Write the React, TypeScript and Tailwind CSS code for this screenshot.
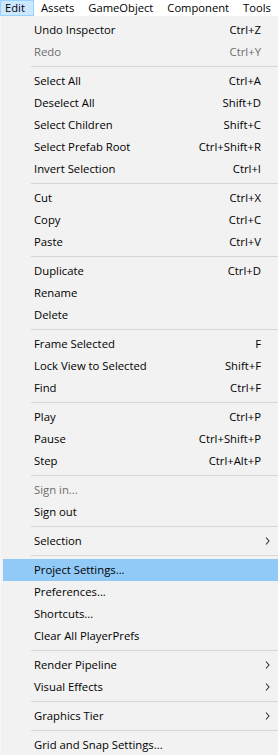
import React from 'react';

type Item =
  | { kind: 'sep' }
  | { kind: 'item'; label: string; shortcut?: string; disabled?: boolean; sub?: boolean; active?: boolean };

const sep: Item = { kind: 'sep' };
const it = (label: string, shortcut?: string, extra: Partial<{ disabled: boolean; sub: boolean; active: boolean }> = {}): Item => ({
  kind: 'item', label, shortcut, ...extra,
});

const ITEMS: Item[] = [
  it('Undo Inspector', 'Ctrl+Z'),
  it('Redo', 'Ctrl+Y', { disabled: true }),
  sep,
  it('Select All', 'Ctrl+A'),
  it('Deselect All', 'Shift+D'),
  it('Select Children', 'Shift+C'),
  it('Select Prefab Root', 'Ctrl+Shift+R'),
  it('Invert Selection', 'Ctrl+I'),
  sep,
  it('Cut', 'Ctrl+X'),
  it('Copy', 'Ctrl+C'),
  it('Paste', 'Ctrl+V'),
  sep,
  it('Duplicate', 'Ctrl+D'),
  it('Rename'),
  it('Delete'),
  sep,
  it('Frame Selected', 'F'),
  it('Lock View to Selected', 'Shift+F'),
  it('Find', 'Ctrl+F'),
  sep,
  it('Play', 'Ctrl+P'),
  it('Pause', 'Ctrl+Shift+P'),
  it('Step', 'Ctrl+Alt+P'),
  sep,
  it('Sign in...', undefined, { disabled: true }),
  it('Sign out'),
  sep,
  it('Selection', undefined, { sub: true }),
  sep,
  it('Project Settings...', undefined, { active: true }),
  it('Preferences...'),
  it('Shortcuts...'),
  it('Clear All PlayerPrefs'),
  sep,
  it('Render Pipeline', undefined, { sub: true }),
  it('Visual Effects', undefined, { sub: true }),
  sep,
  it('Graphics Tier', undefined, { sub: true }),
  sep,
  it('Grid and Snap Settings...'),
];

const MENUBAR = ['Assets', 'GameObject', 'Component', 'Tools'];

function Chevron() {
  return (
    <svg width="5" height="8" viewBox="0 0 5 8" className="text-[#333]">
      <polyline points="1,0.5 4,4 1,7.5" fill="none" stroke="currentColor" strokeWidth="1.1" />
    </svg>
  );
}

function Row({ item }: { item: Extract<Item, { kind: 'item' }> }) {
  return (
    <div
      className={
        'flex items-center h-[22px] pl-[31px] pr-[17px] ' +
        (item.active ? 'bg-[#91c9f7] ' : '') +
        (item.disabled ? 'text-[#6d6d6d]' : 'text-black')
      }
    >
      <span className="flex-1 whitespace-nowrap">{item.label}</span>
      {item.shortcut && <span className="whitespace-nowrap">{item.shortcut}</span>}
      {item.sub && <span className="-mr-[9px] flex items-center"><Chevron /></span>}
    </div>
  );
}

export default function App() {
  return (
    <div className="w-[278px] h-[755px] overflow-hidden bg-[#f2f2f2] text-[11.3px] leading-none" style={{ fontFamily: '"Open Sans", "Noto Sans", sans-serif' }}>
      <div className="flex h-[16px] bg-white items-stretch text-[11.2px]">
        <div className="flex shrink-0 items-center w-[34px] pl-[4px] bg-[#cce8ff] border border-[#99d1ff]">Edit</div>
        {MENUBAR.map((m) => (
          <div key={m} className="flex shrink-0 items-center px-[7px] whitespace-nowrap">
            {m}
          </div>
        ))}
      </div>
      <div className="pt-[3px] pl-[2px] border-l border-[#f7f7f7]">
        {ITEMS.map((item, i) =>
          item.kind === 'sep' ? (
            <div key={i} className="h-[7px] flex items-center pl-[28px]">
              <div className="h-px w-full bg-[#d7d7d7]" />
            </div>
          ) : (
            <Row key={i} item={item} />
          ),
        )}
      </div>
    </div>
  );
}
